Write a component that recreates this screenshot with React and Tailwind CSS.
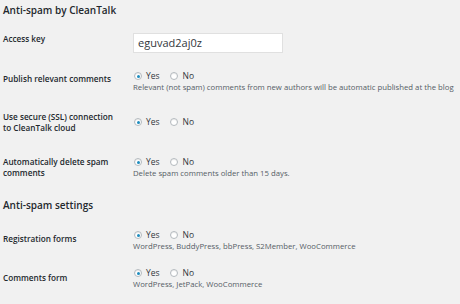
import React from "react";

function Radio({ checked }) {
  return (
    <span className="inline-flex h-[8px] w-[8px] items-center justify-center rounded-full border border-[#b4b9be] bg-white shadow-[inset_0_1px_1px_rgba(0,0,0,0.08)]">
      {checked && <span className="h-[3px] w-[3px] rounded-full bg-[#1e8cbe]" />}
    </span>
  );
}

function YesNo() {
  return (
    <div className="flex h-[12px] items-center pl-[1px] text-[8.5px] leading-[12px] text-[#32373c]">
      <Radio checked />
      <span className="ml-[4px]">Yes</span>
      <span className="ml-[10px] flex"><Radio /></span>
      <span className="ml-[5px]">No</span>
    </div>
  );
}

function Desc({ children }) {
  return <div className="text-[7.75px] leading-[10px] text-[#555d66] whitespace-nowrap">{children}</div>;
}

function Label({ children, className = "" }) {
  return (
    <div className={"w-[133px] shrink-0 pl-[3px] text-[8.2px] font-semibold text-[#23282d] " + className}>
      {children}
    </div>
  );
}

export default function App() {
  return (
    <div
      className="h-[304px] w-[460px] overflow-hidden bg-[#f1f1f1]"
      style={{ fontFamily: '"Open Sans", "Noto Sans", sans-serif' }}
    >
      <div className="pl-[3px] pt-[3px] text-[10px] font-semibold leading-[14px] text-[#23282d]">
        Anti-spam by CleanTalk
      </div>

      <div className="mt-[16px] flex">
        <Label className="pt-[0px] leading-[11px]">Access key</Label>
        <div className="h-[20px] w-[150px] border border-[#e0e0e0] bg-white pl-[4px] text-[11px] leading-[18px] text-[#32373c]">
          eguvad2aj0z
        </div>
      </div>

      <div className="mt-[17px] flex">
        <Label className="pt-[2.5px] leading-[11px]">Publish relevant comments</Label>
        <div>
          <YesNo />
          <Desc>Relevant (not spam) comments from new authors will be automatic published at the blog</Desc>
        </div>
      </div>

      <div className="mt-[20px] flex">
        <Label className="leading-[10.5px]">
          Use secure (SSL) connection
          <br />
          to CleanTalk cloud
        </Label>
        <div className="pt-[4px]">
          <YesNo />
        </div>
      </div>

      <div className="mt-[23px] flex">
        <Label className="pt-[1px] leading-[10.5px]">
          Automatically delete spam
          <br />
          comments
        </Label>
        <div>
          <YesNo />
          <Desc>Delete spam comments older than 15 days.</Desc>
        </div>
      </div>

      <div className="mt-[20px] pl-[3px] text-[10px] font-semibold leading-[14px] text-[#23282d]">
        Anti-spam settings
      </div>

      <div className="mt-[17px] flex">
        <Label className="pt-[3.5px] leading-[11px]">Registration forms</Label>
        <div>
          <YesNo />
          <Desc>WordPress, BuddyPress, bbPress, S2Member, WooCommerce</Desc>
        </div>
      </div>

      <div className="mt-[16px] flex">
        <Label className="pt-[4.5px] leading-[11px]">Comments form</Label>
        <div>
          <YesNo />
          <Desc>WordPress, JetPack, WooCommerce</Desc>
        </div>
      </div>
    </div>
  );
}
